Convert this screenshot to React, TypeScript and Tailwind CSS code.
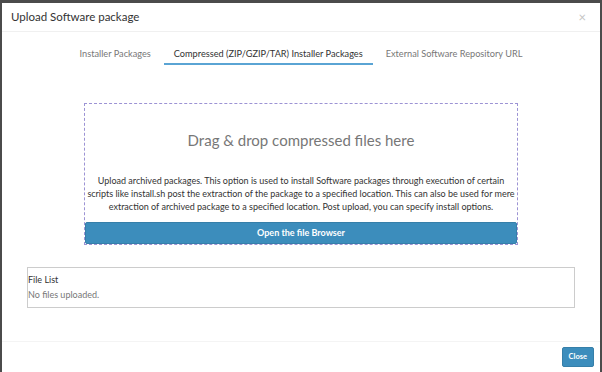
import React from 'react';

const tabs = [
  'Installer Packages',
  'Compressed (ZIP/GZIP/TAR) Installer Packages',
  'External Software Repository URL',
];

export default function App() {
  return (
    <div className="w-[602px] h-[372px] overflow-hidden bg-[#4b4b4b] pt-[3px] px-[2px] font-['Lato',sans-serif]">
      <div className="bg-white h-full flex flex-col">
        {/* Header */}
        <div className="h-[29px] flex items-center justify-between pl-[9px] pr-[14px] border-b border-[#f0f0f0]">
          <span className="text-[11.5px] text-[#333]">Upload Software package</span>
          <span className="text-[13px] text-[#c4c4c4] leading-none">×</span>
        </div>

        {/* Tabs */}
        <div className="flex justify-center gap-[3px] pt-[15px]">
          <div className="px-[10px] h-[18px] text-[9.2px] text-[#777]">{tabs[0]}</div>
          <div className="px-[10px] h-[18px] text-[9.2px] text-[#333] border-b-2 border-[#5aa4d4]">{tabs[1]}</div>
          <div className="px-[10px] h-[18px] text-[9.2px] text-[#777]">{tabs[2]}</div>
        </div>

        {/* Drop zone */}
        <div className="mt-[38px] mx-auto w-[434px] border border-dashed border-[#9c93d4] flex flex-col items-center">
          <div className="pt-[25px] text-[15px] text-[#777]">Drag &amp; drop compressed files here</div>
          <p className="mt-[22px] text-center text-[9px] leading-[13px] text-[#333] whitespace-nowrap">
            Upload archived packages. This option is used to install Software packages through execution of certain
            <br />
            scripts like install.sh post the extraction of the package to a specified location. This can also be used for mere
            <br />
            extraction of archived package to a specified location. Post upload, you can specify install options.
          </p>
          <div className="mt-[9px] w-full h-[22px] bg-[#3c8dbc] border border-[#367fa9] rounded-[2px] flex items-center justify-center text-white text-[9px] font-bold">
            Open the file Browser
          </div>
        </div>

        {/* File list */}
        <div className="mt-[22px] mx-[25px] h-[41px] border border-[#ccc] flex flex-col justify-center text-[9px] leading-[15px]">
          <div className="text-[#333]">File List</div>
          <div className="text-[#777]">No files uploaded.</div>
        </div>

        {/* Footer */}
        <div className="mt-auto h-[31px] border-t border-[#f4f4f4] flex items-center justify-end pr-[6px]">
          <button className="h-[20px] px-[6px] bg-[#3c8dbc] border border-[#367fa9] rounded-[2px] text-white text-[7.5px] font-bold">
            Close
          </button>
        </div>
      </div>
    </div>
  );
}
